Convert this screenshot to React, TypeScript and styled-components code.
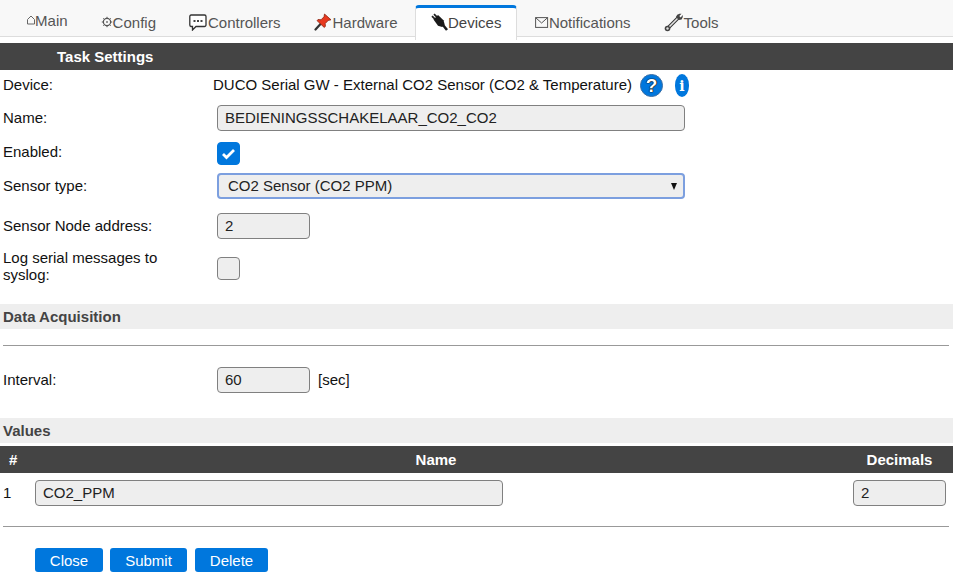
import React from 'react';
import styled, {createGlobalStyle} from "styled-components";

const GlobalStyle = createGlobalStyle`
  html, body {
    margin: 0;
    padding: 0;
    background: #fff;
    color: #111;
    font-family: "Liberation Sans", Arial, sans-serif;
    font-size: 15px;
  }
  * {
    box-sizing: border-box;
  }
`

const HomeIcon = () => (
    <TabIcon width="8" height="10" viewBox="0 0 8 10">
        <path d="M.5 4.500 4 1l3.500 3.500V9H.5z" fill="none" stroke="#666" strokeWidth="1"/>
    </TabIcon>
);

const GearIcon = () => (
    <TabIcon width="12" height="12" viewBox="0 0 12 12">
        <circle cx="6" cy="6" r="3.600" fill="none" stroke="#555" strokeWidth="1.200"/>
        <circle cx="6" cy="6" r="1" fill="#777"/>
        <path d="M6 .8v1.500M6 9.700v1.500M.8 6h1.500M9.700 6h1.500M2.300 2.300l1 1M8.700 8.700l1 1M2.300 9.700l1-1M8.700 3.300l1-1" stroke="#555" strokeWidth="1"/>
    </TabIcon>
);

const BubbleIcon = () => (
    <TabIcon width="19" height="17" viewBox="0 0 19 17">
        <path d="M2 1h13.500A1.500 1.500 0 0 1 17 2.500V11a1.500 1.500 0 0 1-1.500 1.500H7L3.500 16v-3.500H2A1.500 1.500 0 0 1 .8 11V2.500A1.500 1.500 0 0 1 2 1z" fill="#fff" stroke="#333" strokeWidth="1.300"/>
        <rect x="4.500" y="6" width="2" height="2" fill="#444"/>
        <rect x="8" y="6" width="2" height="2" fill="#444"/>
        <rect x="11.500" y="6" width="2" height="2" fill="#444"/>
    </TabIcon>
);

const PinIcon = () => (
    <TabIcon width="19" height="18" viewBox="0 0 19 18">
        <path d="M1.500 16.500 6.500 11" stroke="#333" strokeWidth="2.200" strokeLinecap="round"/>
        <path d="M10.500 1 17 6.800l-2.800.6-3 3.200.2 2.800-1.200 1-7.200-6.800 1-1.100 3 .3 3-3z" fill="#e8391f" stroke="#8a2412" strokeWidth=".8"/>
    </TabIcon>
);

const PlugIcon = () => (
    <TabIcon width="17" height="18" viewBox="0 0 17 18">
        <path d="M3 1.200 6 4.200M1 3.200 4 6.200" stroke="#222" strokeWidth="1.800"/>
        <path d="M2.500 6.500 7 2l5.500 5.200 1.200 4.300-2.500 2.500-4.200-1.300z" fill="#1a1a1a"/>
        <path d="M12 12l4 5" stroke="#1a1a1a" strokeWidth="2.600"/>
    </TabIcon>
);

const MailIcon = () => (
    <TabIcon width="14" height="11" viewBox="0 0 14 11">
        <rect x=".6" y=".6" width="12" height="9.800" fill="none" stroke="#555" strokeWidth="1"/>
        <path d="M1 1l5.600 5L12.200 1" fill="none" stroke="#555" strokeWidth="1"/>
    </TabIcon>
);

const WrenchIcon = () => (
    <TabIcon width="20" height="19" viewBox="0 0 20 19">
        <path d="M4 15 14.500 4.500" stroke="#333" strokeWidth="3.600"/>
        <path d="M4 15 14.500 4.500" stroke="#e4e4e4" strokeWidth="1.600"/>
        <path d="M13.200 1.800 15.500.8l2-.1-2.200 2.400 1.300 1.300 2.300-2.300-.2 2.200-1.100 2.100-2.700.6-3-3z" fill="#444"/>
        <circle cx="3.500" cy="15.500" r="2.800" fill="#444"/>
        <circle cx="3.500" cy="15.500" r="1.200" fill="#ddd"/>
    </TabIcon>
);

const CheckMark = () => (
    <svg width="15" height="13" viewBox="0 0 15 13">
        <path d="M2 7l3.500 3.500L13 3" fill="none" stroke="#fff" strokeWidth="2.800"/>
    </svg>
);

const tabs = [
    {label: "Main", icon: <HomeIcon/>, raised: true},
    {label: "Config", icon: <GearIcon/>},
    {label: "Controllers", icon: <BubbleIcon/>},
    {label: "Hardware", icon: <PinIcon/>},
    {label: "Devices", icon: <PlugIcon/>, active: true},
    {label: "Notifications", icon: <MailIcon/>},
    {label: "Tools", icon: <WrenchIcon/>},
];

export default function App() {
    return (
        <Page>
            <GlobalStyle/>
            <TabBar>
                {tabs.map(tab => (
                    <Tab key={tab.label} $active={tab.active} $raised={tab.raised}>
                        {tab.icon}{tab.label}
                    </Tab>
                ))}
            </TabBar>

            <DarkHeader>
                <TaskTitle>Task Settings</TaskTitle>
            </DarkHeader>

            <FormRow $height={31}>
                <Label>Device:</Label>
                <DeviceName>DUCO Serial GW - External CO2 Sensor (CO2 &amp; Temperature)</DeviceName>
                <RoundHelp>?</RoundHelp>
                <PillInfo>i</PillInfo>
            </FormRow>
            <FormRow $height={34}>
                <Label>Name:</Label>
                <Field $width={468}>BEDIENINGSSCHAKELAAR_CO2_CO2</Field>
            </FormRow>
            <FormRow $height={34}>
                <Label>Enabled:</Label>
                <CheckBox $checked><CheckMark/></CheckBox>
            </FormRow>
            <FormRow $height={34}>
                <Label>Sensor type:</Label>
                <SelectBox>
                    CO2 Sensor (CO2 PPM)
                    <SelectArrow/>
                </SelectBox>
            </FormRow>
            <FormRow $height={46}>
                <Label>Sensor Node address:</Label>
                <Field $width={93}>2</Field>
            </FormRow>
            <FormRow $height={36}>
                <Label>Log serial messages to<br/>syslog:</Label>
                <CheckBox/>
            </FormRow>

            <SectionBar $top={19}>Data Acquisition</SectionBar>
            <Rule $top={16}/>
            <FormRow $height={68}>
                <Label>Interval:</Label>
                <Field $width={93}>60</Field>
                <Unit>[sec]</Unit>
            </FormRow>

            <SectionBar $top={4}>Values</SectionBar>
            <ValuesHeader>
                <HashCell>#</HashCell>
                <NameCell>Name</NameCell>
                <DecimalsCell>Decimals</DecimalsCell>
            </ValuesHeader>
            <ValueRow>
                <RowNumber>1</RowNumber>
                <Field $width={468}>CO2_PPM</Field>
                <DecimalsField $width={93}>2</DecimalsField>
            </ValueRow>
            <Rule $top={20}/>
            <Buttons>
                <ActionButton $width={68} $left={0}>Close</ActionButton>
                <ActionButton $width={77} $left={7}>Submit</ActionButton>
                <ActionButton $width={73} $left={8}>Delete</ActionButton>
            </Buttons>
        </Page>
    );
}

const Page = styled.div`
  width: 953px;
  height: 582px;
  overflow: hidden;
`

const TabBar = styled.div`
  display: flex;
  align-items: flex-start;
  height: 37px;
  padding-left: 10.600px;
  background: #f8f8f8;
  border-bottom: 1px solid #ddd;
`

const Tab = styled.div<{ $active?: boolean; $raised?: boolean }>`
  display: flex;
  align-items: center;
  flex: none;
  position: relative;
  height: ${props => props.$active ? "35px" : "28px"};
  margin: ${props => props.$active ? "5px 1px 0" : "8px 0 0"};
  padding: 0 ${props => props.$active ? "15px" : "16.500px"} ${props => props.$raised ? "4px" : props.$active ? "4px" : "0"};
  color: ${props => props.$active ? "#444" : "#555"};
  background: ${props => props.$active ? "#fff" : "transparent"};
  border-top: ${props => props.$active ? "3px solid #0077dd" : "none"};
  border-left: ${props => props.$active ? "1px solid #ddd" : "none"};
  border-right: ${props => props.$active ? "1px solid #ddd" : "none"};
  border-radius: ${props => props.$active ? "4px 4px 0 0" : "0"};
`

const TabIcon = styled.svg`
  flex: none;
`

const DarkHeader = styled.div`
  display: flex;
  align-items: center;
  height: 27px;
  margin-top: 6px;
  background: #444;
  color: #fff;
  font-weight: bold;
`

const TaskTitle = styled.span`
  padding-left: 57px;
`

const FormRow = styled.div<{ $height: number }>`
  display: flex;
  align-items: center;
  height: ${props => props.$height}px;
`

const Label = styled.div`
  flex: none;
  width: 217px;
  padding: 0 40px 2px 3px;
  line-height: 17px;
`

const DeviceName = styled.span`
  margin-left: -4px;
  padding-bottom: 2px;
  white-space: nowrap;
`

const RoundHelp = styled.span`
  display: flex;
  align-items: center;
  justify-content: center;
  width: 23px;
  height: 23px;
  margin-left: 8px;
  border-radius: 50%;
  background: #0077dd;
  border: 1px solid #3a6ea5;
  color: #fff;
  font-weight: bold;
  font-size: 19px;
  text-shadow: 0 0 1px #000, 0 0 1px #000, 0 0 1px #000;
`

const PillInfo = styled.span`
  display: flex;
  align-items: center;
  justify-content: center;
  width: 14px;
  height: 23px;
  margin-left: 12px;
  border-radius: 7px / 11px;
  background: #0077dd;
  color: #fff;
  font-weight: bold;
  font-family: "DejaVu Serif", serif;
  font-size: 14px;
`

const Field = styled.div<{ $width: number }>`
  display: flex;
  align-items: center;
  flex: none;
  width: ${props => props.$width}px;
  height: 26px;
  padding: 0 0 2px 7px;
  background: #eee;
  border: 1px solid #808080;
  border-radius: 4px;
  color: #222;
`

const DecimalsField = styled(Field)`
  margin-left: auto;
`

const CheckBox = styled.div<{ $checked?: boolean }>`
  display: flex;
  align-items: center;
  justify-content: center;
  width: 23px;
  height: 23px;
  margin-top: 3px;
  background: ${props => props.$checked ? "#0077dd" : "#eee"};
  border: 1px solid ${props => props.$checked ? "#0077dd" : "#808080"};
  border-radius: 4px;
`

const SelectBox = styled.div`
  display: flex;
  align-items: center;
  justify-content: space-between;
  width: 468px;
  height: 26px;
  padding: 0 6px 2px 9px;
  background: #eee;
  border: 2px solid #7c9fdf;
  border-radius: 4px;
  color: #222;
`

const SelectArrow = styled.span`
  width: 0;
  height: 0;
  margin-top: 2px;
  border-left: 3.500px solid transparent;
  border-right: 3.500px solid transparent;
  border-top: 7px solid #111;
`

const Unit = styled.span`
  margin-left: 8px;
  padding-bottom: 2px;
`

const SectionBar = styled.div<{ $top: number }>`
  display: flex;
  align-items: center;
  height: 25px;
  margin-top: ${props => props.$top}px;
  padding-left: 3px;
  background: #eee;
  color: #444;
  font-weight: bold;
`

const Rule = styled.div<{ $top: number }>`
  height: 1px;
  margin: ${props => props.$top}px 4px 0 3px;
  background: #999;
`

const ValuesHeader = styled.div`
  display: flex;
  align-items: center;
  height: 27px;
  margin-top: 3px;
  background: #444;
  color: #fff;
  font-weight: bold;
`

const HashCell = styled.span`
  width: 35px;
  padding-left: 9px;
`

const NameCell = styled.span`
  width: 802px;
  text-align: center;
`

const DecimalsCell = styled.span`
  width: 93px;
  margin-left: 16px;
  text-align: center;
`

const ValueRow = styled.div`
  display: flex;
  align-items: center;
  height: 26px;
  margin-top: 7px;
  padding-right: 7px;
`

const RowNumber = styled.span`
  flex: none;
  width: 35px;
  padding: 0 0 2px 3px;
`

const Buttons = styled.div`
  display: flex;
  margin-top: 21px;
  padding-left: 35px;
`

const ActionButton = styled.div<{ $width: number; $left: number }>`
  display: flex;
  align-items: center;
  justify-content: center;
  width: ${props => props.$width}px;
  height: 24px;
  margin-left: ${props => props.$left}px;
  background: #0077dd;
  border-radius: 3px;
  color: #fff;
`
